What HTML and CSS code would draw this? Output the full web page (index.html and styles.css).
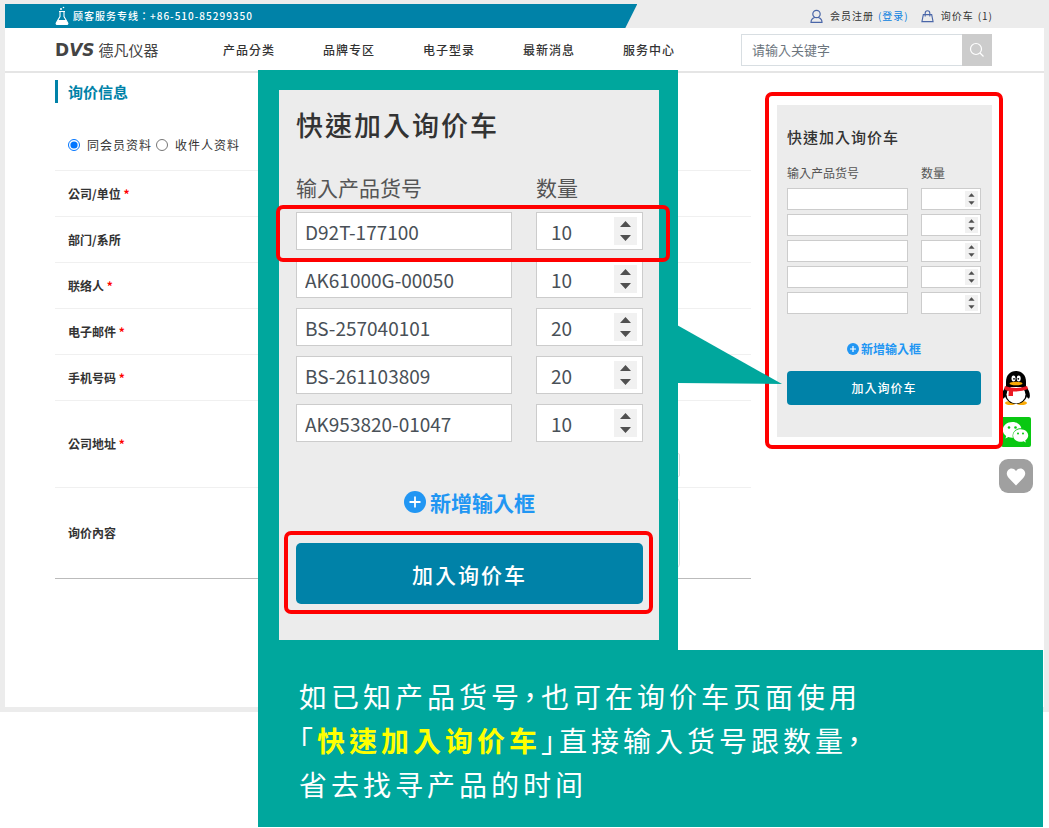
FILE: index.html
```html
<!DOCTYPE html>
<html lang="zh-Hant">
<head>
<meta charset="utf-8">
<meta name="viewport" content="width=device-width, initial-scale=1">
<title>询价信息 - 德凡仪器</title>
<link rel="stylesheet" href="styles.css">
</head>
<body>
<div class="page">
  <div class="site">
    <div class="topbar">
      <div class="hotline">
        <svg class="flask" viewBox="0 0 14 20" aria-hidden="true"><path d="M5 5.5v5L1.5 16.5q-1 2 1 2h9q2 0 1-2L9 10.500v-5M4 5.500h6" fill="none" stroke="#fff" stroke-width="1.100"/><path d="M3 14h8l2 3.500q0 1.500-1.500 1.500h-9Q1 19 1 17.500z" fill="#fff"/><circle cx="6" cy="3" r="1" fill="#fff"/><circle cx="8.500" cy="1.500" r=".8" fill="#fff"/></svg>
        <span>顾客服务专线：+86-510-85299350</span>
      </div>
      <div class="account">
        <svg class="ico-user" viewBox="0 0 13 15" fill="none" stroke="#4a66a8" stroke-width="1.200" aria-hidden="true"><circle cx="6.500" cy="5" r="3.700"/><path d="M1 13.400c0-2.600 1.600-4.200 3.600-4.900h3.800c2 .7 3.600 2.300 3.600 4.900z"/></svg>
        <a href="#">会员注册</a>
        <a class="login" href="#">(登录)</a>
        <svg class="ico-bag" viewBox="0 0 14 14" fill="none" stroke="#4a66a8" stroke-width="1.200" aria-hidden="true"><path d="M2.500 5.500h9l1.500 7.500H1zM4.500 7.500V4a2.500 2.700 0 0 1 5 0v3.500"/></svg>
        <a href="#">询价车</a>
        <span class="count">(1)</span>
      </div>
    </div>
    <header class="header">
      <a class="logo" href="#"><b>D<i>VS</i></b><span>德凡仪器</span></a>
      <nav class="nav">
        <a href="#">产品分类</a><a href="#">品牌专区</a><a href="#">电子型录</a><a href="#">最新消息</a><a href="#">服务中心</a>
      </nav>
      <form class="search">
        <input type="text" placeholder="请输入关键字" aria-label="请输入关键字">
        <button type="button" aria-label="搜索"><svg viewBox="0 0 16 16" fill="none" stroke="#fff" stroke-width="1.200"><circle cx="7" cy="7" r="5.500"/><path d="M11 11l3.500 3.500"/></svg></button>
      </form>
    </header>
    <main class="main">
      <form class="inquiry">
        <h1>询价信息</h1>
        <div class="source">
          <label><input type="radio" name="source" checked>同会员资料</label>
          <label><input type="radio" name="source">收件人资料</label>
        </div>
        <div class="row"><label for="company">公司/单位 <em>*</em></label><input id="company" type="text"></div>
        <div class="row"><label for="dept">部门/系所</label><input id="dept" type="text"></div>
        <div class="row"><label for="contact">联络人 <em>*</em></label><input id="contact" type="text"></div>
        <div class="row"><label for="email">电子邮件 <em>*</em></label><input id="email" type="email"></div>
        <div class="row"><label for="phone">手机号码 <em>*</em></label><input id="phone" type="tel"></div>
        <div class="row address"><label for="address">公司地址 <em>*</em></label><input id="address" type="text"></div>
        <div class="row message"><label for="message">询价內容</label><textarea id="message"></textarea></div>
      </form>
      <aside class="quick">
        <h2>快速加入询价车</h2>
        <div class="items">
          <span>输入产品货号</span><span>数量</span>
          <input type="text" aria-label="货号 1"><input type="number" aria-label="数量 1">
          <input type="text" aria-label="货号 2"><input type="number" aria-label="数量 2">
          <input type="text" aria-label="货号 3"><input type="number" aria-label="数量 3">
          <input type="text" aria-label="货号 4"><input type="number" aria-label="数量 4">
          <input type="text" aria-label="货号 5"><input type="number" aria-label="数量 5">
        </div>
        <button class="add" type="button"><svg viewBox="0 0 20 20" aria-hidden="true"><circle cx="10" cy="10" r="10" fill="#2196f3"/><path d="M10 5v10M5 10h10" stroke="#fff" stroke-width="2"/></svg>新增输入框</button>
        <button class="submit" type="button">加入询价车</button>
      </aside>
    </main>
    <div class="rail">
      <a href="#" aria-label="QQ"><svg class="qq" viewBox="0 0 28 34">
        <path d="M4.500 15C-.5 20-.5 26 1 27.500c1 .5 2.500-2 2.500-3h21c0 1 1.500 3.500 2.500 3 1.500-1.500 1.500-7.500-3.500-12.500z" fill="#000"/>
        <ellipse cx="8.500" cy="32" rx="5.500" ry="2" fill="#faab07"/><ellipse cx="19.500" cy="32" rx="5.500" ry="2" fill="#faab07"/>
        <ellipse cx="14" cy="22" rx="11.500" ry="11" fill="#000"/><ellipse cx="14" cy="23.500" rx="9.500" ry="9" fill="#fff"/>
        <path d="M4 16V11C4 4 8 0 14 0s10 4 10 11v5z" fill="#000"/>
        <ellipse cx="11.500" cy="7.500" rx="2" ry="2.900" fill="#fff"/><ellipse cx="16.700" cy="7.500" rx="2" ry="2.900" fill="#fff"/><circle cx="12" cy="7.800" r=".9"/><circle cx="16.300" cy="7.800" r=".9"/>
        <ellipse cx="14" cy="12.500" rx="6.500" ry="1.800" fill="#faab07"/>
        <path d="M3 15q11 4 22 0l1.200 3q-6 2.500-13.200 2.500h-2V25H6.500l.3-5Q3.500 19.500 2 18z" fill="#eb1923"/>
      </svg></a>
      <a href="#" aria-label="微信"><svg class="wechat" viewBox="0 0 30 30">
        <rect width="30" height="30" rx="2" fill="#09c812"/>
        <path d="M11.500 5C6 5 1.800 8.500 1.800 13c0 2.500 1.300 4.600 3.400 6l-.8 2.600 3-1.500q2 .7 4.500.6c-1.500-5 2.500-9.600 8.500-9.400C19.500 7.500 16 5 11.500 5z" fill="#fff"/>
        <path d="M19.700 12.200c-4.300 0-7.600 2.800-7.600 6.300s3.300 6.300 7.600 6.300q1.500 0 2.800-.5l2.400 1.300-.7-2.100c1.800-1.200 3-3 3-5 0-3.500-3.200-6.300-7.500-6.300z" fill="#fff"/>
        <g fill="#09c812"><circle cx="8" cy="10.500" r="1.300"/><circle cx="14.500" cy="10.500" r="1.300"/><circle cx="17" cy="16.500" r="1"/><circle cx="22" cy="16.500" r="1"/></g>
      </svg></a>
      <a href="#" aria-label="收藏"><svg class="heart" viewBox="0 0 34 34"><rect width="34" height="34" rx="9" fill="#a0a0a0"/><path d="M17 26.500l-7-7.300c-2.600-2.800-2.900-6-1-8 2.300-2.400 6-2.100 8 .9 2-3 5.700-3.300 8-.9 1.900 2 1.600 5.200-1 8z" fill="#fff"/></svg></a>
    </div>
  </div>

  <section class="callout">
    <div class="zoom">
      <div class="quick quick-large">
        <h2>快速加入询价车</h2>
        <div class="items">
          <span>输入产品货号</span><span>数量</span>
          <input type="text" value="D92T-177100" aria-label="产品货号 1"><input type="number" value="10" aria-label="产品数量 1">
          <input type="text" value="AK61000G-00050" aria-label="产品货号 2"><input type="number" value="10" aria-label="产品数量 2">
          <input type="text" value="BS-257040101" aria-label="产品货号 3"><input type="number" value="20" aria-label="产品数量 3">
          <input type="text" value="BS-261103809" aria-label="产品货号 4"><input type="number" value="20" aria-label="产品数量 4">
          <input type="text" value="AK953820-01047" aria-label="产品货号 5"><input type="number" value="10" aria-label="产品数量 5">
        </div>
        <button class="add" type="button"><svg viewBox="0 0 20 20" aria-hidden="true"><circle cx="10" cy="10" r="10" fill="#2196f3"/><path d="M10 5v10M5 10h10" stroke="#fff" stroke-width="1.600"/></svg>新增输入框</button>
        <button class="submit" type="button">加入询价车</button>
      </div>
      <div class="mark mark-row"></div>
      <div class="mark mark-submit"></div>
    </div>
    <p class="caption">如已知产品货号，也可在询价车页面使用<br>「<strong>快速加入询价车</strong>」直接输入货号跟数量，<br>省去找寻产品的时间</p>
  </section>
  <div class="mark mark-aside"></div>
  <svg class="pointer" viewBox="0 0 105 60" aria-hidden="true"><path d="M0 0L105 59L0 58z" fill="#00a79d"/></svg>
</div>
</body>
</html>
```
FILE: styles.css
```css
* { box-sizing: border-box; }

body {
  margin: 0;
  background: #fff;
  color: #333;
  font: 12px/18px "Noto Sans CJK TC", "Noto Sans CJK SC", sans-serif;
}

a { color: inherit; text-decoration: none; }
h1, h2, p { margin: 0; }
svg { display: block; flex: none; }

input, button, textarea { font: inherit; color: inherit; }

.page { position: relative; min-height: 828px; }

.site {
  position: relative;
  padding: 4px 5px 5px;
  background: #ececec;
}

/* top bar */
.topbar {
  display: flex;
  align-items: center;
  height: 24px;
  padding-right: 51px;
  font-size: 10px;
  letter-spacing: 1px;
}

.hotline {
  display: flex;
  align-items: center;
  gap: 4px;
  width: 64%;
  margin-right: auto;
  height: 24px;
  padding-left: 50px;
  background: #0082a8;
  color: #fff;
  font-weight: 500;
  clip-path: polygon(0 0, 100% 0, calc(100% - 12px) 100%, 0 100%);
}

.flask { width: 14px; height: 20px; }

.account { display: flex; align-items: center; gap: 4px; white-space: nowrap; }
.ico-user { width: 13px; height: 15px; margin-right: 3px; }
.ico-bag { width: 13px; height: 14px; margin: 0 3px 0 8px; }
.login { color: #0a7fe0; }

/* header */
.header {
  display: flex;
  align-items: center;
  height: 45px;
  padding: 0 52px 0 50px;
  background: #fff;
  border-bottom: 2px solid #e5e5e5;
}

.logo { display: flex; align-items: center; gap: 4px; width: 168px; font-size: 15px; color: #444; }
.logo b { font: bold 17px/18px "DejaVu Sans", sans-serif; }

.nav { display: flex; flex: 1; font-weight: 500; letter-spacing: 1px; }
.nav a { flex: 0 0 100px; }

.search { display: flex; width: 251px; height: 32px; }
.search input {
  flex: 1;
  min-width: 0;
  padding: 0 10px;
  border: 1px solid #d8dee2;
  border-right: 0;
  font-size: 13px;
}
.search input::placeholder { color: #6c757d; opacity: 1; }
.search button { width: 30px; padding: 0 7px; border: 0; background: #ccc; }

/* inquiry form */
.main {
  display: grid;
  grid-template-columns: 1fr 215px;
  align-items: start;
  gap: 26px;
  min-height: 634px;
  padding: 7px 52px 0 50px;
  background: #fff;
}

.inquiry h1 {
  padding-left: 10px;
  border-left: 3px solid #0082a8;
  color: #0082a8;
  font-size: 15px;
  font-weight: 700;
  line-height: 23px;
}

.source {
  display: flex;
  align-items: flex-end;
  gap: 4px;
  height: 68px;
  padding: 0 13px 16px;
  border-bottom: 1px solid #f0f0f0;
  letter-spacing: 1px;
}
.source label { display: flex; align-items: center; gap: 7px; }
.source input { width: 12px; height: 12px; margin: 0; accent-color: #0075ff; }

.row {
  display: flex;
  align-items: center;
  height: 46px;
  padding-left: 13px;
  border-bottom: 1px solid #f0f0f0;
}
.row label { width: 200px; font-weight: 700; }
.row em { color: #f00; font-style: normal; }
.row input, .row textarea { width: 240px; height: 24px; border: 1px solid #ddd; border-radius: 2px; }
.row.address { height: 87px; }
.row.address input { width: 412px; align-self: flex-end; margin-bottom: 10px; }
.row.message { height: 91px; border-bottom-color: #bbb; }
.row.message textarea { width: 412px; height: 70px; resize: none; border-radius: 4px; }

/* quick add panel */
.quick {
  display: flex;
  flex-direction: column;
  margin-top: 25px;
  padding: 21px 11px 32px 10px;
  background: #ececec;
}
.quick h2 { font-size: 15px; font-weight: 500; line-height: 22px; letter-spacing: 1px; }

.items {
  display: grid;
  grid-template-columns: 121px 60px;
  gap: 4px 13px;
  margin-top: 16px;
  color: #555;
}
.items span { padding-bottom: 2px; }
.items input {
  width: 100%;
  min-width: 0;
  height: 22px;
  padding: 0 1px 0 4px;
  border: 1px solid #ccc;
  border-radius: 0;
  background: #fff;
  color: #495057;
}
.items input::-webkit-inner-spin-button {
  appearance: none;
  width: 13px;
  height: 16px;
  margin: 0 1px 0 0;
  opacity: 1;
  background: #f1f1f1 url("data:image/svg+xml,%3Csvg xmlns='http://www.w3.org/2000/svg' viewBox='0 0 23 28'%3E%3Cpath d='M6 10l5.500-6L17 10zM6 18l5.500 6L17 18z' fill='%23505050'/%3E%3C/svg%3E") center / 100% 100% no-repeat;
}

.add {
  display: flex;
  align-items: center;
  justify-content: center;
  gap: 2px;
  margin-top: 26px;
  padding: 0;
  border: 0;
  background: none;
  color: #2196f3;
  font-weight: 700;
}
.add svg { width: 12px; height: 12px; }

.submit {
  height: 34px;
  margin-top: 13px;
  padding: 0;
  border: 0;
  border-radius: 4px;
  background: #0082a8;
  color: #fff;
  font-weight: 500;
  letter-spacing: 1px;
}

/* enlarged panel */
.quick-large { margin: 0; padding: 17px 16px 36px 17px; }
.quick-large h2 { font-size: 27px; line-height: 36px; letter-spacing: 2px; }
.quick-large .items {
  grid-template-columns: 216px 107px;
  gap: 10px 24px;
  margin-top: 29px;
  font-size: 21px;
  line-height: 30px;
}
.quick-large .items span { padding-bottom: 0; }
.quick-large .items input { height: 38px; padding: 0 4px 0 8px; font-size: 19px; }
.quick-large .items input[type="number"] { padding-left: 14px; }
.quick-large .items input::-webkit-inner-spin-button { width: 23px; height: 28px; }
.quick-large .add { gap: 4px; margin-top: 45px; font-size: 21px; line-height: 30px; }
.quick-large .add svg { width: 22px; height: 22px; }
.quick-large .submit { height: 61px; margin-top: 26px; border-radius: 5px; font-size: 21px; letter-spacing: 2px; }

/* floating contact buttons */
.rail {
  position: absolute;
  top: 371px;
  right: 16px;
  display: flex;
  flex-direction: column;
  align-items: center;
  gap: 12px;
}
.qq { width: 28px; height: 34px; }
.wechat { width: 30px; height: 30px; }
.heart { width: 34px; height: 34px; }

/* callout laid over the page */
.callout { position: absolute; top: 70px; left: 258px; right: 6px; }
.zoom { position: relative; width: 420px; padding: 20px 19px 10px 21px; background: #00a79d; }
.caption {
  padding: 24px 41px 21px;
  background: #00a79d;
  color: #fff;
  font-size: 28px;
  line-height: 44px;
  letter-spacing: 4px;
  font-weight: 400;
  font-feature-settings: "halt";
}
.caption strong { color: #ff0; font-weight: 700; }

.mark { position: absolute; border: 4px solid #f00; border-radius: 7px; }
.mark-row { top: 135px; left: 18px; width: 394px; height: 57px; }
.mark-submit { top: 461px; left: 26px; width: 369px; height: 83px; }
.mark-aside { top: 92px; right: 46px; width: 238px; height: 357px; }
.pointer { position: absolute; top: 325px; left: 677px; width: 105px; height: 60px; }
```
